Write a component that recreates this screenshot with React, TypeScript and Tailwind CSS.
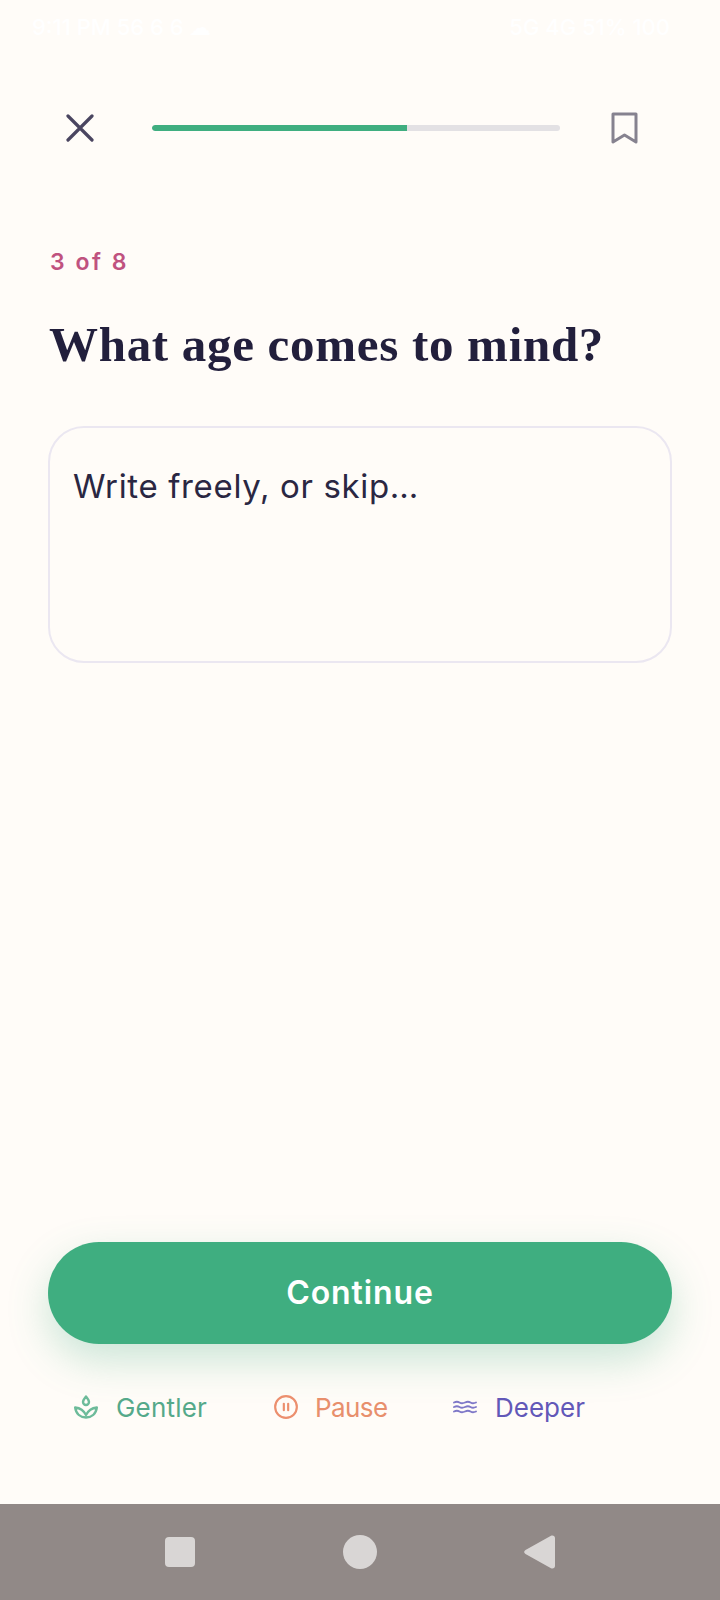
import { CirclePause } from 'lucide-react';

const sans = "font-['Inter','Noto_Sans',sans-serif]";

const LotusIcon = () => (
  <svg width="24" height="24" viewBox="0 0 24 24" fill="none" stroke="#6DBB9A" strokeWidth="2.400" strokeLinecap="round" strokeLinejoin="round">
    <path d="M12 1.500c-1.800 2.200-3 3.800-3 5.500a3 3 0 0 0 6 0c0-1.700-1.200-3.300-3-5.500z" />
    <path d="M12 22.500c-5.500 0-10-3.500-10.800-10 4.300 .5 8.800 3.500 10.800 7.500 2-4 6.500-7 10.800-7.500-.8 6.500-5.300 10-10.800 10z" />
  </svg>
);

const WavesIcon = () => (
  <svg width="24" height="14" viewBox="0 0 24 14" fill="none" stroke="#7F78C8" strokeWidth="1.800" strokeLinecap="round">
    <path d="M1 2.500c2.500-1.200 3.500-1.200 5.500 0s3 1.200 5.500 0 3.500-1.200 5.500 0 3 1.200 5.500 0" />
    <path d="M1 7c2.500-1.200 3.500-1.200 5.500 0s3 1.200 5.500 0 3.500-1.200 5.500 0 3 1.200 5.500 0" />
    <path d="M1 11.500c2.500-1.200 3.500-1.200 5.500 0s3 1.200 5.500 0 3.500-1.200 5.500 0 3 1.200 5.500 0" />
  </svg>
);

export default function App() {
  return (
    <div className={`flex h-[1600px] w-[720px] flex-col overflow-hidden bg-[#fffcf8] ${sans}`}>
      {/* status bar, white on cream so it hardly shows */}
      <div className="flex h-[52px] items-center justify-between pl-[32px] pr-[50px] pt-[2px] text-[22px] font-medium text-white">
        <span>9:11 PM 56 6 6 ☁</span>
        <span>5G 4G 51% 100</span>
      </div>

      <div className="mt-[50px] flex h-[52px] items-center pl-[66px]">
        <svg width="28" height="28" viewBox="0 0 28 28" fill="none" stroke="#4a4560" strokeWidth="3.200" strokeLinecap="round">
          <path d="M2 2l24 24M26 2L2 26" />
        </svg>
        <div className="ml-[58px] h-[6px] w-[408px] overflow-hidden rounded-full bg-[#e3e1e4]">
          <div className="h-full w-[255px] rounded-l-full bg-[#3fae80]" />
        </div>
        <svg className="ml-[51px]" width="27" height="32" viewBox="0 0 27 32" fill="none" stroke="#86828f" strokeWidth="3" strokeLinejoin="round">
          <path d="M2 2h23v28l-11.500-7L2 30z" />
        </svg>
      </div>

      <div className="mt-[93px] pl-[50px] text-[23px] font-semibold leading-[30px] tracking-[2.500px] text-[#c0527f]">3 of 8</div>

      <h1 className="mt-[38px] pl-[49px] font-['Liberation_Serif',serif] text-[49px] font-bold leading-[60px] tracking-[0.700px] text-[#221f3c]">
        What age comes to mind?
      </h1>

      <div className="mx-[48px] mt-[51px] h-[237px] rounded-[36px] border-2 border-[#ebe7f1] px-[23px] pt-[37px] text-[33px] font-normal leading-[42px] tracking-[0.650px] text-[#2a2742]">
        Write freely, or skip…
      </div>

      <div className="mt-auto px-[48px]">
        <button className="flex h-[102px] w-full items-center justify-center rounded-full bg-[#3fae80] text-[32px] font-semibold tracking-[0.900px] text-white shadow-[0_16px_40px_rgba(63,174,128,0.28)]">
          Continue
        </button>
      </div>

      <div className="mb-[75px] mt-[41px] flex h-[44px] items-center pl-[74px] text-[26px]">
        <div className="flex w-[199px] items-center gap-[18px] text-[#55a98a]">
          <LotusIcon />
          <span className="tracking-[0.200px]">Gentler</span>
        </div>
        <div className="flex w-[180px] items-center gap-[16px] text-[#e88f6c]">
          <CirclePause size={26} strokeWidth={2} className="text-[#ec8f6e]" />
          <span className="tracking-[-0.600px]">Pause</span>
        </div>
        <div className="flex items-center gap-[18px] text-[#6258b8]">
          <WavesIcon />
          <span>Deeper</span>
        </div>
      </div>

      <div className="flex h-[96px] items-center bg-[#918987] pl-[165px]">
        <div className="h-[30px] w-[30px] rounded-[4px] bg-[#d9d6d5]" />
        <div className="ml-[148px] h-[34px] w-[34px] rounded-full bg-[#d9d6d5]" />
        <svg className="ml-[147px]" width="32" height="34" viewBox="0 0 32 34" fill="#d9d6d5">
          <path d="M1.500 15 27 .8c2-1 4 .2 4 2.400v27.600c0 2.200-2 3.400-4 2.400L1.500 19c-1.800-1-1.800-3 0-4z" />
        </svg>
      </div>
    </div>
  );
}
